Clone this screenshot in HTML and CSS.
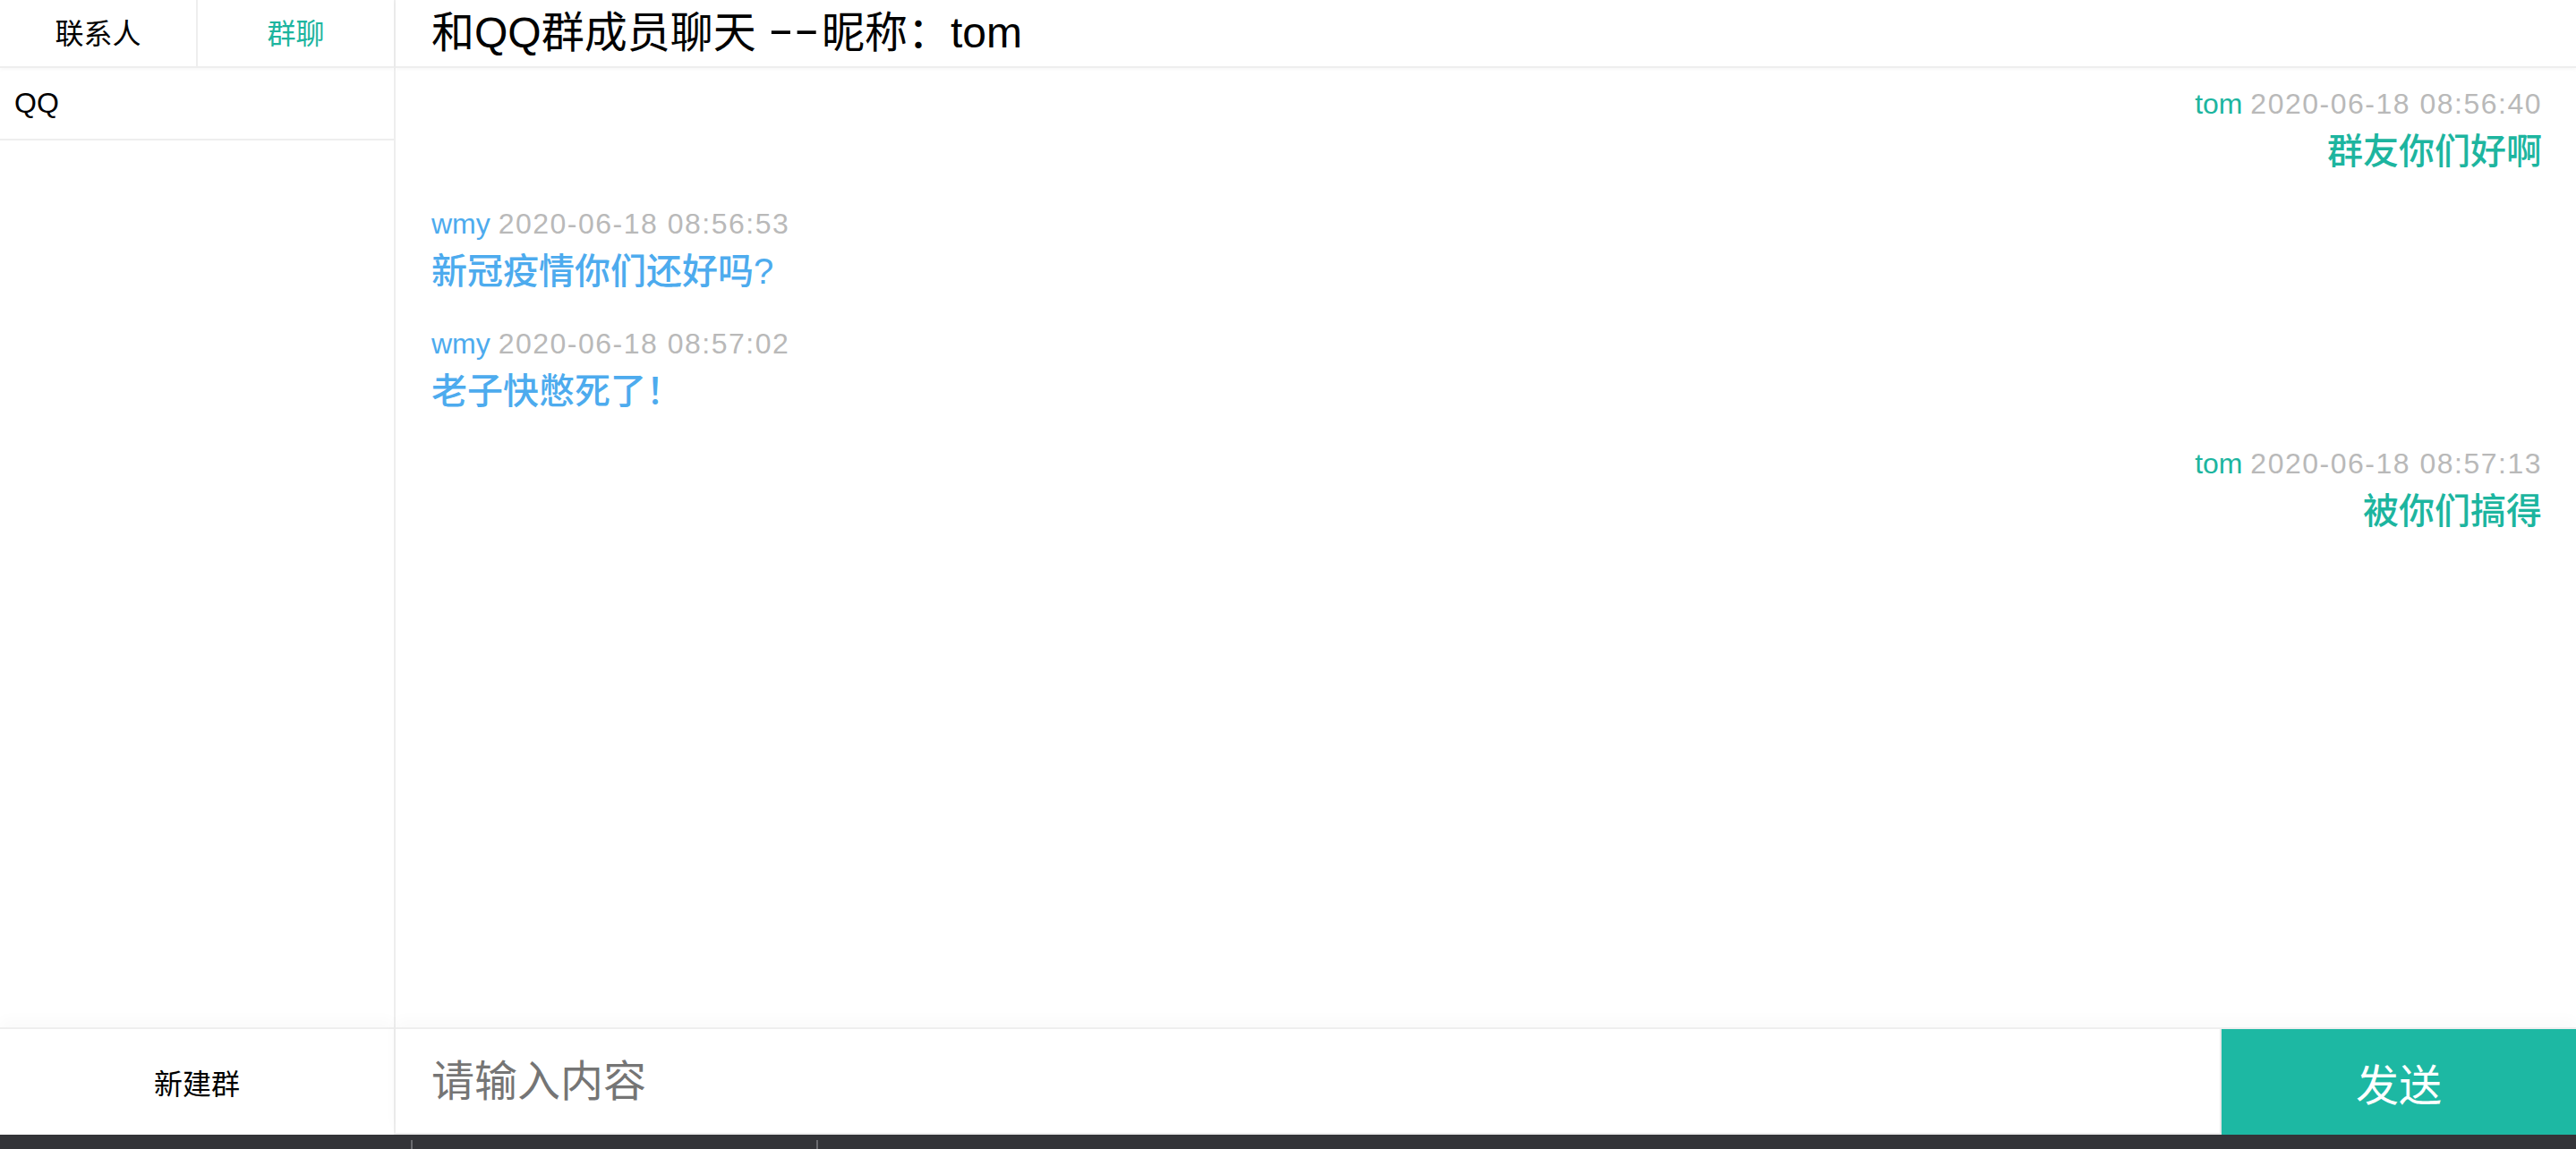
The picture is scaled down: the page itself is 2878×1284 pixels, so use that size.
FILE: index.html
```html
<!DOCTYPE html>
<html lang="zh-CN">
<head>
<meta charset="utf-8">
<title>群聊</title>
<link rel="stylesheet" href="styles.css">
</head>
<body>
<div class="app">
  <aside class="sidebar">
    <div class="tabs">
      <div class="tab">联系人</div>
      <div class="tab active">群聊</div>
    </div>
    <div class="group-list">
      <div class="group-item">QQ</div>
    </div>
    <div class="new-group">新建群</div>
  </aside>
  <main class="main">
    <h2 class="title">和QQ群成员聊天 <span class="dash">--</span>昵称：tom</h2>
    <div class="messages">
      <div class="msg mine">
        <div class="meta"><span class="name">tom</span> <span class="time">2020-06-18 08:56:40</span></div>
        <div class="text">群友你们好啊</div>
      </div>
      <div class="msg other">
        <div class="meta"><span class="name">wmy</span> <span class="time">2020-06-18 08:56:53</span></div>
        <div class="text">新冠疫情你们还好吗?</div>
      </div>
      <div class="msg other">
        <div class="meta"><span class="name">wmy</span> <span class="time">2020-06-18 08:57:02</span></div>
        <div class="text">老子快憋死了！</div>
      </div>
      <div class="msg mine">
        <div class="meta"><span class="name">tom</span> <span class="time">2020-06-18 08:57:13</span></div>
        <div class="text">被你们搞得</div>
      </div>
    </div>
    <div class="composer">
      <input class="input" type="text" placeholder="请输入内容">
      <button class="send">发送</button>
    </div>
  </main>
</div>
<div class="dock">
  <span class="tick tick-1"></span>
  <span class="tick tick-2"></span>
</div>
</body>
</html>
```

FILE: styles.css
```css
* { box-sizing: border-box; }
html, body { margin: 0; padding: 0; }
body {
  width: 2878px;
  height: 1284px;
  overflow: hidden;
  display: flex;
  flex-direction: column;
  background: #fff;
  font-family: "Liberation Sans", "Noto Sans CJK SC", sans-serif;
  color: #000;
}
.app {
  flex: 1;
  display: flex;
  min-height: 0;
}
.sidebar {
  width: 442px;
  flex: none;
  display: flex;
  flex-direction: column;
  border-right: 2px solid #eeeeee;
}
.tabs {
  height: 76px;
  display: flex;
  border-bottom: 2px solid #eeeeee;
  box-shadow: 0 2px 4px rgba(0,0,0,0.03);
}
.tab {
  flex: 1;
  display: flex;
  align-items: center;
  justify-content: center;
  font-size: 32px;
  padding-bottom: 4px;
}
.tab + .tab { border-left: 2px solid #eeeeee; }
.tab.active { color: #1db59f; }
.group-list { flex: 1; }
.group-item {
  height: 81px;
  display: flex;
  align-items: center;
  padding-left: 16px;
  font-size: 32px;
  border-bottom: 2px solid #eeeeee;
}
.new-group {
  height: 120px;
  border-top: 2px solid #eeeeee;
  display: flex;
  align-items: center;
  justify-content: center;
  font-size: 32px;
  box-shadow: 0 -8px 16px rgba(0,0,0,0.025);
}
.main {
  flex: 1;
  display: flex;
  flex-direction: column;
  min-width: 0;
}
.title {
  margin: 0;
  height: 76px;
  padding: 0 0 10px 40px;
  display: flex;
  align-items: center;
  font-size: 48px;
  font-weight: normal;
  white-space: pre;
  border-bottom: 2px solid #eeeeee;
  box-shadow: 0 2px 4px rgba(0,0,0,0.03);
}
.dash {
  display: inline-block;
  transform: scaleX(1.8);
  transform-origin: left center;
  margin-right: 28px;
}
.messages {
  flex: 1;
  padding: 16px 38px 0 40px;
  display: flex;
  flex-direction: column;
  gap: 28px;
}
.msg { display: flex; flex-direction: column; }
.msg.mine { align-items: flex-end; }
.msg.other { align-items: flex-start; }
.meta { font-size: 32px; line-height: 48px; }
.time { color: #b9b9b9; letter-spacing: 1.5px; }
.text { font-size: 40px; line-height: 58px; font-weight: 500; }
.msg.mine .name, .msg.mine .text { color: #1db59f; }
.msg.other .name, .msg.other .text { color: #4dabee; }
.composer {
  height: 120px;
  display: flex;
  border-top: 2px solid #eeeeee;
  box-shadow: 0 -8px 16px rgba(0,0,0,0.025);
}
.input {
  flex: 1;
  min-width: 0;
  border: 0;
  border-bottom: 2px solid #eeeeee;
  outline: none;
  padding: 0 40px;
  font-family: "Liberation Sans", "Noto Sans CJK SC", sans-serif;
  font-size: 48px;
  color: #000;
  background: #fff;
}
.input::placeholder { color: #757575; }
.send {
  width: 398px;
  flex: none;
  border: 0;
  border-left: 2px solid #e8e8e8;
  background: #1db8a3;
  color: #fff;
  font-family: "Liberation Sans", "Noto Sans CJK SC", sans-serif;
  font-size: 48px;
  padding: 0;
}
.dock {
  height: 16px;
  flex: none;
  background: #333438;
  position: relative;
}
.tick {
  position: absolute;
  top: 6px;
  width: 2px;
  height: 10px;
  background: #6a6b6f;
}
.tick-1 { left: 459px; }
.tick-2 { left: 912px; }
```
